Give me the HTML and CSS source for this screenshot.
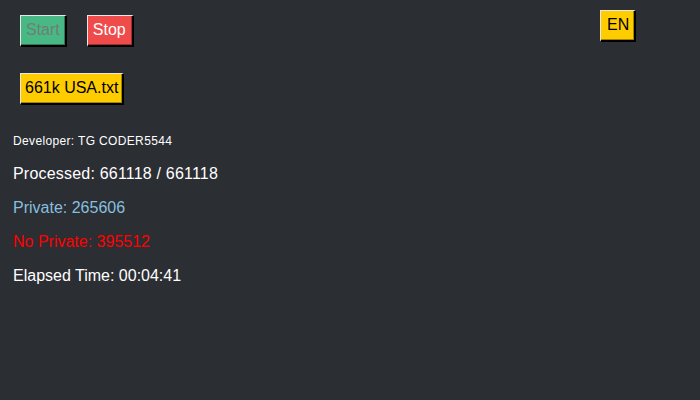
FILE: index.html
```html
<!DOCTYPE html>
<html>
<head>
<meta charset="utf-8">
<link rel="stylesheet" href="styles.css">
</head>
<body>
<div class="controls">
  <div class="row">
    <button class="btn btn-start" disabled>Start</button>
    <button class="btn btn-stop">Stop</button>
  </div>
  <div class="row file-row">
    <button class="btn btn-yellow file">661k USA.txt</button>
  </div>
</div>
<button class="btn btn-yellow lang">EN</button>
<div class="info">
  <p class="dev">Developer: TG CODER5544</p>
  <p class="line first">Processed: 661118 / 661118</p>
  <p class="line private">Private: 265606</p>
  <p class="line noprivate">No Private: 395512</p>
  <p class="line">Elapsed Time: 00:04:41</p>
</div>
</body>
</html>
```
FILE: styles.css
```css
html, body {
  margin: 0;
  padding: 0;
  background: #2b2e33;
  font-family: "Liberation Sans", Arial, sans-serif;
  color: #ffffff;
  height: 100%;
}
.controls {
  padding: 15px 20px 0 20px;
}
.row {
  display: flex;
  gap: 20px;
}
.file-row {
  margin-top: 26px;
}
.btn {
  font-family: "Liberation Sans", Arial, sans-serif;
  font-size: 16px;
  line-height: 18px;
  padding: 5px 5px 6px 5px;
  border-style: solid;
  border-width: 1px 2px 2px 1px;
  border-color: #e6e6e6 #000 #000 #e6e6e6;
  box-shadow: inset -1px -1px 0 rgba(0,0,0,0.35);
  margin: 0;
  cursor: pointer;
}
.btn-start {
  background: #48b985;
  color: #6f7f74;
}
.btn-stop {
  background: #f04b4b;
  color: #ffffff;
  padding-right: 6px;
}
.btn-yellow {
  background: #ffcc00;
  color: #000000;
}
.btn-yellow.file {
  padding-left: 4px;
  padding-right: 4px;
}
.lang {
  position: absolute;
  top: 10px;
  left: 600px;
  padding-left: 6px;
}
.info {
  padding: 0 13px;
  margin-top: 29px;
}
.info p {
  margin: 0;
}
.dev {
  font-size: 12px;
  line-height: 14px;
  letter-spacing: 0.35px;
}
.line {
  font-size: 16px;
  line-height: 18px;
  margin-top: 16px !important;
}
.line.first {
  margin-top: 17px !important;
  letter-spacing: 0.2px;
}
.private {
  color: #87bfdf;
}
.noprivate {
  color: #ff0000;
}
```
